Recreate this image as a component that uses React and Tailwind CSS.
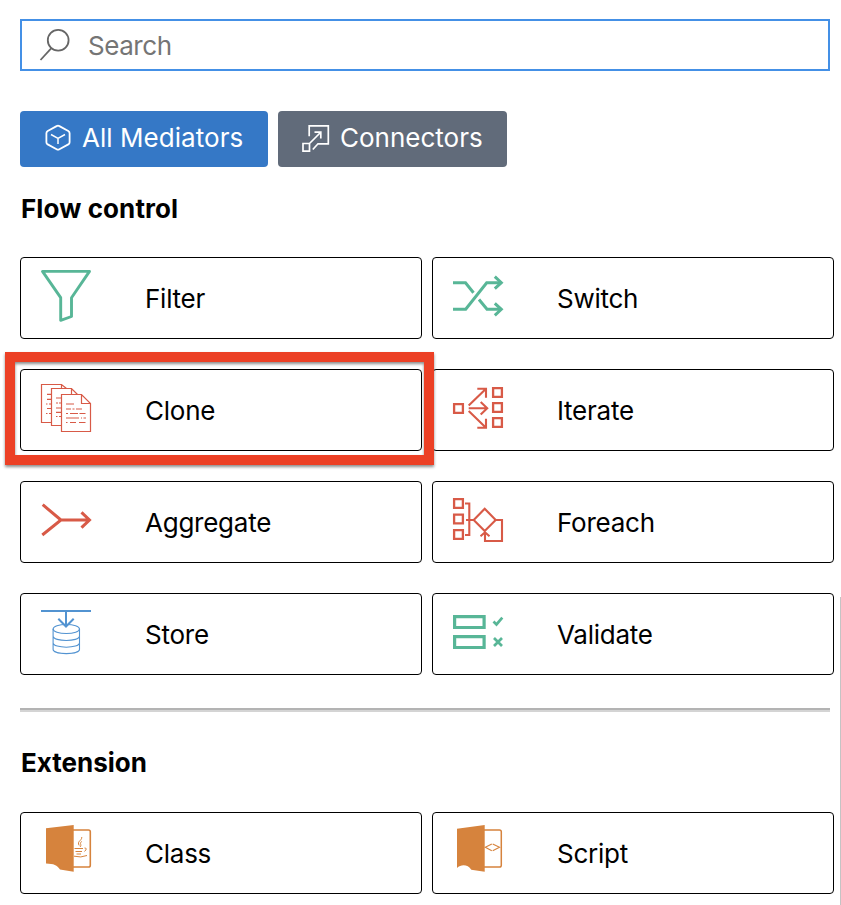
import React from "react";

const GREEN = "#58b697";
const RED = "#d85a47";
const BLUE = "#5293d1";
const ORANGE = "#d6833d";

function Icon({ color, width = 2, children }) {
  return (
    <svg className="h-20 w-20 shrink-0" viewBox="0 0 80 80" fill="none" stroke={color} strokeWidth={width}>
      {children}
    </svg>
  );
}

const FilterIcon = () => (
  <Icon color={GREEN} width={2.9}>
    <path strokeLinejoin="round" d="M21.5 13.4H68.5L50.5 39.7V58.5L39.7 62.3V39.7Z" />
  </Icon>
);

const SwitchIcon = () => (
  <Icon color={GREEN} width={3}>
    <path d="M20 24.7H32.5L40.5 34.7M20 51.3H32.7L53.7 24.7H68M46 41.5L54 51.3H68" />
    <path d="M61.8 18.7L68.3 24.7L61.8 30.7M61.8 45.3L68.3 51.3L61.8 57.3" />
  </Icon>
);

const CloneIcon = () => (
  <Icon color={RED} width={1.2}>
    <path d="M30.5 52.5H20.5V14.5H40.5L45.5 18.5M40.5 14.5V18.5M40.5 55.5H30.5V18.5H50.5L56.5 24.5M50.5 18.5V24.5" />
    <path d="M40.5 24.5H60.5L69.5 33.5V61.5H40.5ZM60.5 24.5V33.5H69.5" />
    <path d="M45 34H53M45 39h5M51.5 39h2M55 39h6M45 43.5h2M49 43.5h8M58.5 43.5h6M45 48h13M60 48h1M62.5 48h2.5M45 52.5h1.5M49 52.5h6M58 52.5h6.5" />
    <path d="M26 24.3h4M26 29.3h4M25 34h1.5M28 34h2M26 38.500h4M25 43.5h1.5M28 43.5h2M35 28h5M35 33h2M38 33h2M35 38h5M35 42.3h5M35 46.5h1.5M38 46.5h2" />
  </Icon>
);

const IterateIcon = () => (
  <Icon color={RED} width={2.3}>
    <path d="M21.100 34.100h8.800v8.800h-8.800zM60.100 18.100h8.800v8.800h-8.800zM60.100 33.100h8.800v8.800h-8.800zM60.100 48.100h8.800v8.800h-8.800z" />
    <path strokeWidth="2.1" d="M35.7 35.5L53 18.7M44.3 18.7H53V27.7M35.7 38.3H54M47.7 32L54.2 38.3L47.7 44.5M35.7 41L53 57.7M44.3 57.7H53V48.7" />
  </Icon>
);

const AggregateIcon = () => (
  <Icon color={RED} width={3}>
    <path d="M21.7 22.7L40 38L21.3 53M40 38H68.5M60.5 30.3L68.5 38L60.5 45.7" />
  </Icon>
);

const ForeachIcon = () => (
  <Icon color={RED} width={2.3}>
    <path d="M21.100 17.100h8.800v8.800h-8.800zM21.100 32.600h8.800v8.800h-8.800zM21.100 48.100h8.800v8.800h-8.800z" />
    <path strokeWidth="2.1" d="M32 21.5H36.3V53H32M33 38H40.7M51.7 26.7L62.7 38L51.7 49L40.7 38ZM62.7 38H69V59H52V50M47.5 54.3L52 50.3L56.5 54.3" />
  </Icon>
);

const StoreIcon = () => (
  <Icon color={BLUE} width={2}>
    <path d="M20 17H70M45 17V32M37.3 24.7L45 32.5L52.7 24.7" />
    <g strokeWidth="1.1">
      <ellipse cx="45.300" cy="35" rx="13.200" ry="4.500" />
      <path d="M32.100 35V55.300C32.100 61 58.500 61 58.500 55.300V35M32.100 42C32.100 48 58.500 48 58.500 42M32.100 48.700C32.100 54.700 58.500 54.700 58.500 48.700" />
    </g>
  </Icon>
);

const ValidateIcon = () => (
  <Icon color={GREEN} width={3.200}>
    <path d="M21.600 22.600h29.500v10.900h-29.500zM21.600 42.600h29.500v10.900h-29.500z" />
    <path strokeWidth="2.700" d="M60.500 27.500L63.500 30.500L69.300 23.700M61 44L69 52M69 44L61 52" />
  </Icon>
);

const ClassIcon = () => (
  <Icon color={ORANGE} width={1.6}>
    <path d="M52 17H67.5Q69.3 17 69.3 18.8V52.2Q69.3 54 67.5 54H52" />
    <path fill={ORANGE} stroke="none" d="M25 15.3L52.7 12V58.7L39 56.5C36 52 33 50.7 25 50.5Z" />
    <path strokeWidth="1" d="M60.8 24C61 28 55.5 28 58.2 32.5M60.8 28.5C57.5 30.5 61.5 31.5 59 34M53.5 35.5H62M54.5 38.5H61M63.5 35Q67 35 63.5 38.5M55.5 41H60M53 43.2Q60 45 66 42.5" />
  </Icon>
);

const ScriptIcon = () => (
  <Icon color={ORANGE} width={1.5}>
    <path d="M51 17H66.5Q68.3 17 68.3 18.8V52.2Q68.3 54 66.500 54H51" />
    <path fill={ORANGE} stroke="none" d="M24 15.7L51.7 12V58.7L38.3 56.7C35 51.3 28 51 24 55Z" />
    <path strokeWidth="1.1" d="M58.800 31L52.3 34.3L58.800 37.7M59.700 31L66.5 34.3L59.700 37.7" />
  </Icon>
);

function Card({ icon, label }) {
  return (
    <button className="flex h-[82px] items-center rounded-[4px] border border-black bg-white text-left">
      {icon}
      <span className="ml-[44px] pt-0.5 leading-8 tracking-[-0.25px]">{label}</span>
    </button>
  );
}

export default function App() {
  return (
    <main className="relative h-[905px] w-[841px] overflow-hidden bg-white pl-5 pt-[19px] font-['Inter',sans-serif] text-[26px] text-black">
      <label className="flex h-[52px] w-[810px] items-center border-2 border-[#4490e6]">
        <svg className="ml-[16px] h-9 w-9 shrink-0" viewBox="0 0 36 36" fill="none" stroke="#666" strokeWidth="1.8">
          <circle cx="20.2" cy="13.3" r="10.4" />
          <path d="M13.4 21.2L2.5 33" />
        </svg>
        <span className="ml-[14px] pt-px tracking-[-0.45px] text-[#757575]">Search</span>
      </label>

      <nav className="mt-10 flex gap-[10px] text-white">
        <button className="flex h-14 w-[248px] items-center rounded-[4px] bg-[#3578c6] pb-[3px] pl-[24px]">
          <svg className="h-7 w-7 shrink-0" viewBox="0 0 28 28" fill="none" stroke="currentColor" strokeWidth="1.8" strokeLinejoin="round">
            <path d="M12.6 2.1Q14 1.3 15.4 2.1L24.3 7Q25.6 7.8 25.6 9.2V18.2Q25.6 19.6 24.3 20.4L15.4 25.3Q14 26.1 12.6 25.3L3.7 20.4Q2.4 19.6 2.4 18.2V9.2Q2.4 7.8 3.7 7Z" />
            <path strokeWidth="1.5" d="M7 10.5L14 14.3L21 10.5M14 14.3V20" />
          </svg>
          <span className="ml-[10px] whitespace-nowrap tracking-[0.05px]">All Mediators</span>
        </button>
        <button className="flex h-14 w-[229px] items-center rounded-[4px] bg-[#616b7a] pb-[3px] pl-[24px]">
          <svg className="h-7 w-7 shrink-0" viewBox="0 0 28 28" fill="none" stroke="currentColor" strokeWidth="1.7">
            <path d="M7.200 12.3V1.9H26.300V19.8H16L10.800 25.500M1 19.5H7.500V27.200H1ZM7.500 19.500L18.500 8.500M12.500 8.200H18.800V14.500" />
          </svg>
          <span className="ml-[10px]">Connectors</span>
        </button>
      </nav>

      <h2 className="mt-[26px] pl-px text-[26px] font-bold leading-8 tracking-[0.1px]">Flow control</h2>
      <section className="mt-8 grid w-[814px] grid-cols-2 gap-x-[10px] gap-y-[30px]">
        <Card icon={<FilterIcon />} label="Filter" />
        <Card icon={<SwitchIcon />} label="Switch" />
        <Card icon={<CloneIcon />} label="Clone" />
        <Card icon={<IterateIcon />} label="Iterate" />
        <Card icon={<AggregateIcon />} label="Aggregate" />
        <Card icon={<ForeachIcon />} label="Foreach" />
        <Card icon={<StoreIcon />} label="Store" />
        <Card icon={<ValidateIcon />} label="Validate" />
      </section>

      <hr className="mt-[33px] h-1 w-[810px] border-0 border-t-2 border-[#b3b3b3] bg-[#d4d4d4]" />

      <h2 className="mt-[35px] pl-px text-[26px] font-bold leading-8">Extension</h2>
      <section className="mt-[33px] grid w-[814px] grid-cols-2 gap-x-[10px]">
        <Card icon={<ClassIcon />} label="Class" />
        <Card icon={<ScriptIcon />} label="Script" />
      </section>

      <div className="pointer-events-none absolute left-[5px] top-[352px] h-[113px] w-[429px] border-[10px] border-[#ec4025] drop-shadow-[0_2px_1.5px_rgba(0,0,0,0.45)]" />
      <div className="absolute bottom-0 right-0 top-[597px] w-px bg-[#c4c4c4]" />
    </main>
  );
}
